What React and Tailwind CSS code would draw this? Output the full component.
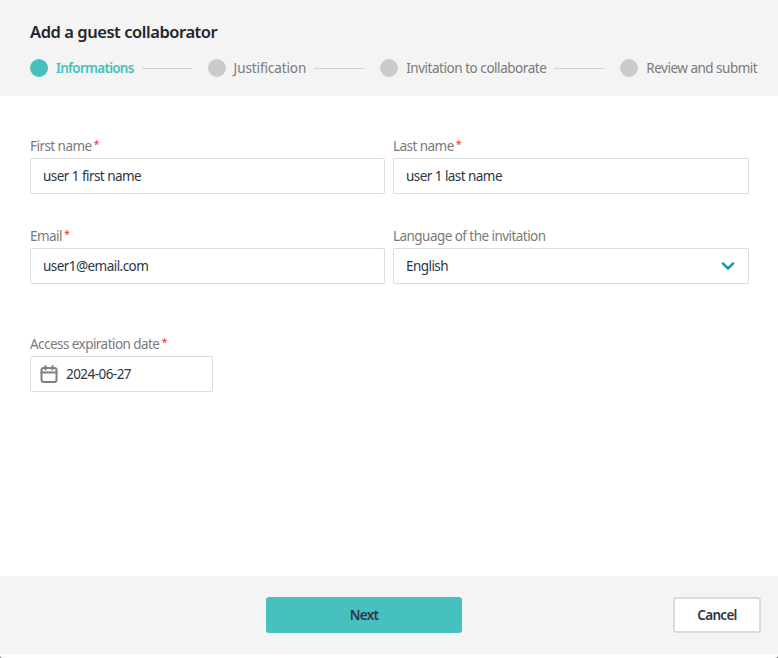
import { ChevronDown } from 'lucide-react';

const steps = [
  { label: 'Informations', active: true, line: true, text: 'font-semibold text-[#47c1bf] tracking-[-0.75px]' },
  { label: 'Justification', line: true, text: 'text-[#7a7a7a] tracking-[-0.1px]' },
  { label: 'Invitation to collaborate', line: true, text: 'text-[#7a7a7a] tracking-[-0.46px]' },
  { label: 'Review and submit', text: 'text-[#7a7a7a] tracking-[-0.5px]' },
];

function Label({ text, required }) {
  return (
    <div className="h-[18px] text-[13.5px] leading-[18px] text-[#7a7a7a] tracking-[-0.55px] flex">
      {text}
      {required && <span className="text-[#e5392d] ml-[2px] text-[11px] leading-[14px]">*</span>}
    </div>
  );
}

function Field({ label, required, value }) {
  return (
    <div>
      <Label text={label} required={required} />
      <div className="mt-[3px] h-9 border border-[#dcdcdc] rounded-[2px] bg-white pl-3 flex items-center text-[13.5px] text-[#2c3644] tracking-[-0.55px]">
        {value}
      </div>
    </div>
  );
}

export default function App() {
  return (
    <div className="w-[778px] h-[658px] bg-[#8a8a8a] overflow-hidden" style={{ fontFamily: '"Noto Sans", sans-serif' }}>
      <div className="h-full flex flex-col bg-white rounded-b-[3px] overflow-hidden">
        <div className="h-24 bg-[#f4f4f4] pl-[30px] pt-[20px]">
          <h1 className="text-[16.5px] leading-6 font-semibold text-[#22262b] tracking-[-0.45px]">Add a guest collaborator</h1>
          <div className="flex items-center mt-[15px] h-[18px]">
            {steps.map((step) => (
              <div key={step.label} className="flex items-center">
                <span className={`w-[18px] h-[18px] rounded-full ${step.active ? 'bg-[#47c1bf]' : 'bg-[#cbcbcb]'}`} />
                <span className={`ml-2 text-[13.5px] whitespace-nowrap ${step.text}`}>
                  {step.label}
                </span>
                {step.line && <span className="w-[50px] h-px bg-[#cfcfcf] ml-2 mr-4" />}
              </div>
            ))}
          </div>
        </div>

        <div className="flex-1 pl-[30px] pt-[41px]">
          <div className="grid grid-cols-[355px_356px] gap-2">
            <Field label="First name" required value="user 1 first name" />
            <Field label="Last name" required value="user 1 last name" />
          </div>
          <div className="grid grid-cols-[355px_356px] gap-2 mt-[33px]">
            <Field label="Email" required value="user1@email.com" />
            <div>
              <Label text="Language of the invitation" />
              <div className="mt-[3px] h-9 border border-[#dcdcdc] rounded-[2px] bg-white pl-3 pr-[10px] flex items-center justify-between text-[13.5px] text-[#2c3644] tracking-[-0.55px]">
                English
                <ChevronDown size={20} strokeWidth={3} className="text-[#1a9ea8]" />
              </div>
            </div>
          </div>
          <div className="mt-[51px] w-[183px]">
            <Label text="Access expiration date" required />
            <div className="mt-[3px] h-9 border border-[#dcdcdc] rounded-[2px] bg-white pl-[9px] flex items-center text-[13.5px] text-[#2c3644] tracking-[-0.55px]">
              <svg width="18" height="18" viewBox="0 0 18 18" fill="none" stroke="#808080" strokeWidth="2" strokeLinecap="round">
                <rect x="1.5" y="3" width="15" height="14" rx="2" />
                <path d="M1.5 7.5h15M5.5 1v3.5M12.5 1v3.5" />
              </svg>
              <span className="ml-[8px]">2024-06-27</span>
            </div>
          </div>
        </div>

        <div className="h-[78px] mb-1 bg-[#f4f4f4] flex items-center pl-[266px] pr-[17px]">
          <button className="w-[196px] h-9 rounded-[3px] bg-[#47c1bf] text-[13.5px] font-semibold text-[#2c3644] tracking-[-0.75px]">Next</button>
          <button className="ml-auto w-[88px] h-9 rounded-[3px] bg-white border-2 border-[#d8dbe6] text-[13.5px] font-semibold text-[#2c3644] tracking-[-0.7px]">Cancel</button>
        </div>
      </div>
    </div>
  );
}
